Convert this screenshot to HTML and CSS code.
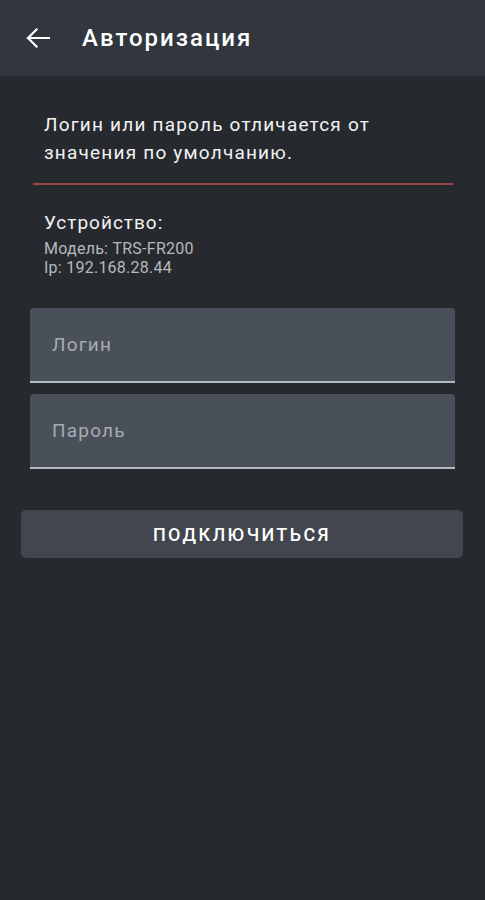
FILE: index.html
```html
<!DOCTYPE html>
<html lang="ru">
<head>
    <meta charset="UTF-8">
    <meta name="viewport" content="width=device-width, initial-scale=1.0">
    <title>Авторизация</title>
    <link rel="stylesheet" href="styles.css">
</head>
<body>
    <header class="toolbar">
        <button class="back-btn" type="button" aria-label="Назад">
            <svg width="24" height="24" viewBox="0 0 24 24">
                <path d="M23 12H2M10.5 3.5L2 12l8.5 8.5" fill="none" stroke="#fff" stroke-width="2.2" stroke-linecap="square"/>
            </svg>
        </button>
        <h1 class="toolbar-title">Авторизация</h1>
    </header>

    <main class="content">
        <p class="warning">Логин или пароль отличается от значения по умолчанию.</p>
        <div class="separator"></div>

        <div class="device">
            <div class="device-title">Устройство:</div>
            <div class="device-info">Модель: TRS-FR200</div>
            <div class="device-info">Ip: 192.168.28.44</div>
        </div>

        <form class="login-form">
            <div class="field">
                <input type="text" placeholder="Логин">
            </div>
            <div class="field">
                <input type="password" placeholder="Пароль">
            </div>
            <button class="connect-btn" type="submit">Подключиться</button>
        </form>
    </main>
</body>
</html>
```

FILE: styles.css
```css
body {
    margin: 0;
    min-height: 900px;
    background-color: #262a2f;
    font-family: Roboto, "Noto Sans", sans-serif;
    color: #fff;
}

.toolbar {
    display: flex;
    align-items: center;
    height: 76px;
    padding-left: 26px;
    background-color: #32373f;
    box-sizing: border-box;
}

.back-btn {
    display: flex;
    padding: 0;
    border: none;
    background: none;
    cursor: pointer;
}

.toolbar-title {
    margin: 0 0 0 32px;
    font-size: 24px;
    font-weight: 500;
    letter-spacing: 2px;
}

.content {
    padding: 0 22px 0 21px;
}

.warning {
    margin: 35px 0 0 23px;
    font-size: 19px;
    line-height: 28px;
    letter-spacing: 1.2px;
    color: #f2f2f2;
    max-width: 390px;
}

.separator {
    height: 2px;
    margin: 16px 10px 0 12px;
    background-color: #97484a;
}

.device {
    margin: 26px 0 0 23px;
}

.device-title {
    font-size: 19px;
    line-height: 24px;
    letter-spacing: 1px;
    color: #f2f2f2;
}

.device-info {
    font-size: 16px;
    line-height: 19px;
    letter-spacing: 0.25px;
    color: #b6b9be;
}

.device-title + .device-info {
    margin-top: 4px;
}

.login-form {
    display: flex;
    flex-direction: column;
    margin-top: 31px;
}

.field {
    margin: 0 8px 11px 9px;
    background-color: #4a5059;
    border-radius: 4px 4px 0 0;
    border-bottom: 2px solid #b3bac2;
}

.field input {
    display: block;
    width: 100%;
    height: 73px;
    padding: 0 22px;
    border: none;
    background: none;
    box-sizing: border-box;
    font-family: inherit;
    font-size: 19px;
    letter-spacing: 1.2px;
    color: #fff;
    outline: none;
}

.field input::placeholder {
    color: #a6abb2;
}

.connect-btn {
    height: 48px;
    margin-top: 30px;
    border: none;
    border-radius: 5px;
    background-color: #41464f;
    color: #fff;
    font-family: inherit;
    font-size: 18px;
    font-weight: 500;
    letter-spacing: 2.4px;
    text-transform: uppercase;
    cursor: pointer;
}
```
